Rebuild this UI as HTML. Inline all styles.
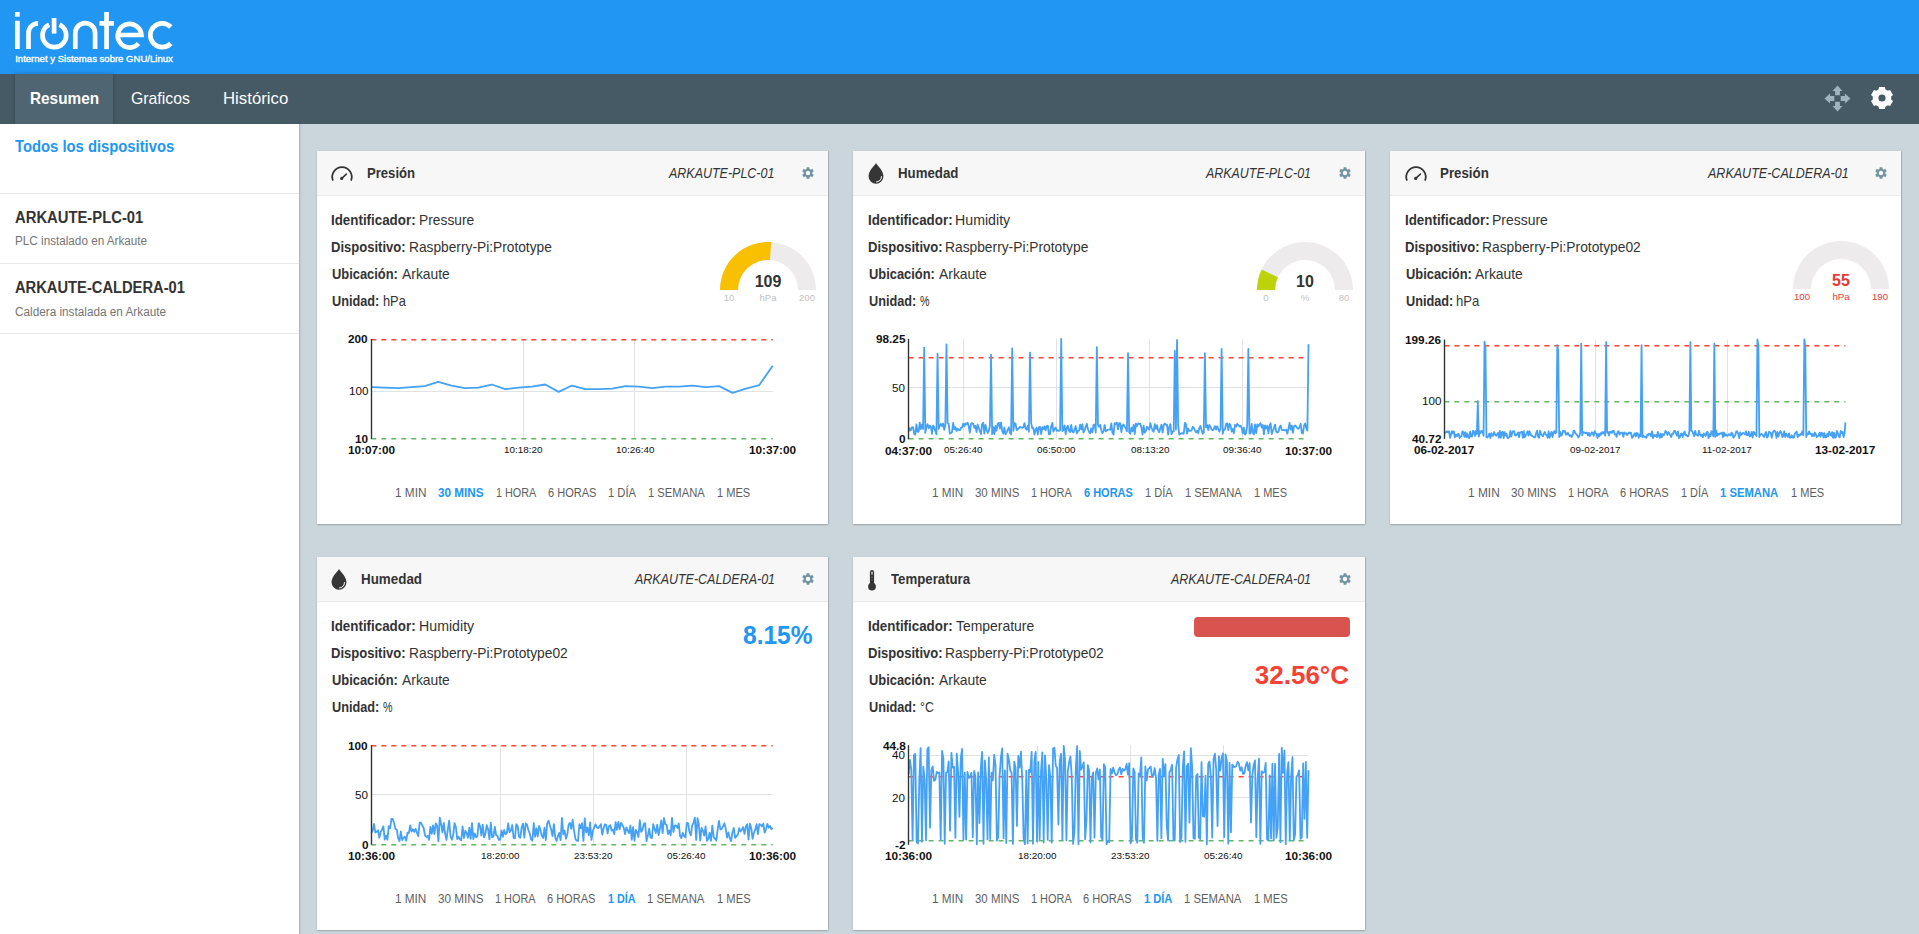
<!DOCTYPE html>
<html><head><meta charset="utf-8"><title>irontec</title><style>
*{box-sizing:border-box;margin:0;padding:0}
html,body{width:1919px;height:934px;overflow:hidden;background:#CBD6DC;font-family:"Liberation Sans",sans-serif;color:#333}
.abs{position:absolute}
.t{position:absolute;white-space:nowrap;line-height:1;transform-origin:0 0}
.card{position:absolute;background:#fff;box-shadow:0 1px 1.5px rgba(0,0,0,.22),1px 0 1px rgba(0,0,0,.12)}
.ch{position:absolute;left:0;top:0;right:0;height:45px;background:#F7F7F7;border-bottom:1px solid #ECECEC}
svg text{font-family:"Liberation Sans",sans-serif}
</style></head><body>
<div class="abs" style="left:0;top:0;width:1919px;height:74px;background:#2196F3"><svg class="abs" style="left:0;top:0" width="200" height="74" viewBox="0 0 200 74">
<g fill="none" stroke="#fff" stroke-width="4.7">
<line x1="17.4" y1="20.8" x2="17.4" y2="49"/>
<path d="M28.5 49.1 V33 A 9.6 9.6 0 0 1 38.1 23.4"/>
<path d="M49.16 24.70 A 11.85 11.85 0 1 0 59.54 24.70"/>
<line x1="54.1" y1="18.1" x2="54.1" y2="33.6"/>
<path d="M75.3 49 V33 A 9.8 9.8 0 0 1 95.1 33 V49"/>
<line x1="106.55" y1="12" x2="106.55" y2="49.1"/>
<line x1="99.4" y1="23.4" x2="114" y2="23.4"/>
<path d="M118 35 H141.4 A 11.8 11.8 0 1 0 138.5 43.5"/>
<path d="M170.8 27 A 11.9 11.9 0 1 0 170.8 43.5"/>
</g>
<rect x="15" y="12" width="4.7" height="4.7" fill="#fff"/>
<text x="15.2" y="61.7" font-size="8.2" fill="#fff" stroke="#fff" stroke-width="0.3" textLength="157.6" lengthAdjust="spacingAndGlyphs">Internet y Sistemas sobre GNU/Linux</text>
</svg></div>
<div class="abs" style="left:0;top:74px;width:1919px;height:50px;background:#455A64"><div class="abs" style="left:15px;top:0;width:98px;height:50px;background:#4F6571;box-shadow:0 0 4px rgba(0,0,0,.25)"></div></div>
<div class="t" style="left:29.56px;top:90.42px;font-size:16.4px;color:#fff;font-weight:bold;transform:scaleX(0.9363);">Resumen</div>
<div class="t" style="left:131.30px;top:90.42px;font-size:16.4px;color:#fff;transform:scaleX(0.9650);">Graficos</div>
<div class="t" style="left:223.28px;top:90.42px;font-size:16.4px;color:#fff;transform:scaleX(1.0233);">Histórico</div>
<svg class="abs" style="left:1824.1px;top:84.9px" width="27" height="27" viewBox="0 0 27 27"><path fill="#A0B3BC" d="M13.50 0.50 L18.50 6.10 L15.90 6.10 L15.90 10.30 L11.10 10.30 L11.10 6.10 L8.50 6.10 Z M26.50 13.50 L20.90 18.50 L20.90 15.90 L16.70 15.90 L16.70 11.10 L20.90 11.10 L20.90 8.50 Z M13.50 26.50 L8.50 20.90 L11.10 20.90 L11.10 16.70 L15.90 16.70 L15.90 20.90 L18.50 20.90 Z M0.50 13.50 L6.10 8.50 L6.10 11.10 L10.30 11.10 L10.30 15.90 L6.10 15.90 L6.10 18.50 Z"/></svg>
<svg class="abs" style="left:1866.5px;top:83.1px" width="30" height="30" viewBox="0 0 30 30"><path fill="#fff" fill-rule="evenodd" d="M12.05 3.99 L17.95 3.99 L18.33 6.32 L20.85 7.77 L23.06 6.94 L26.01 12.05 L24.19 13.55 L24.19 16.45 L26.01 17.95 L23.06 23.06 L20.85 22.23 L18.33 23.68 L17.95 26.01 L12.05 26.01 L11.67 23.68 L9.15 22.23 L6.94 23.06 L3.99 17.95 L5.81 16.45 L5.81 13.55 L3.99 12.05 L6.94 6.94 L9.15 7.77 L11.67 6.32 Z M18.60 15.00 A3.6 3.6 0 1 0 11.40 15.00 A3.6 3.6 0 1 0 18.60 15.00 Z"/></svg>
<div class="abs" style="left:0;top:124px;width:300px;height:810px;background:#fff;border-right:1px solid #B0B6B9;box-shadow:1px 0 2px rgba(0,0,0,.06)"></div>
<div class="abs" style="left:0;top:193px;width:299px;height:1px;background:#E8E8E8"></div>
<div class="abs" style="left:0;top:263px;width:299px;height:1px;background:#E8E8E8"></div>
<div class="abs" style="left:0;top:333px;width:299px;height:1px;background:#E8E8E8"></div>
<div class="t" style="left:14.60px;top:139.36px;font-size:16px;color:#2196F3;font-weight:bold;transform:scaleX(0.9247);">Todos los dispositivos</div>
<div class="t" style="left:14.60px;top:209.56px;font-size:16px;color:#333;font-weight:bold;transform:scaleX(0.9252);">ARKAUTE-PLC-01</div>
<div class="t" style="left:14.60px;top:235.44px;font-size:12px;color:#757575;transform:scaleX(0.9757);">PLC instalado en Arkaute</div>
<div class="t" style="left:14.60px;top:279.66px;font-size:16px;color:#333;font-weight:bold;transform:scaleX(0.9190);">ARKAUTE-CALDERA-01</div>
<div class="t" style="left:14.60px;top:305.74px;font-size:12px;color:#757575;transform:scaleX(0.9801);">Caldera instalada en Arkaute</div>
<div class="card" style="left:317px;top:151px;width:511px;height:373px"><div class="ch"></div></div>
<svg class="abs" style="left:330.1px;top:165.1px" width="24" height="24" viewBox="0 0 24 24">
<path d="M2.96 15.65 A 9.75 9.75 0 1 1 21.04 15.65" fill="none" stroke="#333" stroke-width="1.75"/>
<line x1="11.70" y1="13.40" x2="16.40" y2="9.10" stroke="#333" stroke-width="1.5" stroke-linecap="round"/>
<circle cx="11.70" cy="13.40" r="1.6" fill="#333"/></svg>
<div class="t" style="left:367.23px;top:165.20px;font-size:15px;color:#333;font-weight:bold;transform:scaleX(0.8727);">Presión</div>
<div class="t" style="left:669.23px;top:165.20px;font-size:15px;color:#333;font-style:italic;transform:scaleX(0.8315);">ARKAUTE-PLC-01</div>
<svg class="abs" style="left:801.2px;top:165.6px" width="14" height="14" viewBox="0 0 14 14"><path fill="#7393A3" fill-rule="evenodd" d="M5.60 1.17 L8.40 1.17 L8.47 2.85 L9.86 3.65 L11.35 2.87 L12.75 5.30 L11.33 6.20 L11.33 7.80 L12.75 8.70 L11.35 11.13 L9.86 10.35 L8.47 11.15 L8.40 12.83 L5.60 12.83 L5.53 11.15 L4.14 10.35 L2.65 11.13 L1.25 8.70 L2.67 7.80 L2.67 6.20 L1.25 5.30 L2.65 2.87 L4.14 3.65 L5.53 2.85 Z M9.20 7.00 A2.2 2.2 0 1 0 4.80 7.00 A2.2 2.2 0 1 0 9.20 7.00 Z"/></svg>
<div class="t" style="left:331.41px;top:212.20px;font-size:15px;color:#333;font-weight:bold;transform:scaleX(0.8903);">Identificador:</div>
<div class="t" style="left:418.78px;top:212.20px;font-size:15px;color:#333;transform:scaleX(0.9203);">Pressure</div>
<div class="t" style="left:331.43px;top:239.10px;font-size:15px;color:#333;font-weight:bold;transform:scaleX(0.8695);">Dispositivo:</div>
<div class="t" style="left:408.88px;top:239.10px;font-size:15px;color:#333;transform:scaleX(0.9162);">Raspberry-Pi:Prototype</div>
<div class="t" style="left:332.30px;top:266.00px;font-size:15px;color:#333;font-weight:bold;transform:scaleX(0.8589);">Ubicación:</div>
<div class="t" style="left:401.90px;top:266.00px;font-size:15px;color:#333;transform:scaleX(0.9250);">Arkaute</div>
<div class="t" style="left:332.30px;top:292.90px;font-size:15px;color:#333;font-weight:bold;transform:scaleX(0.8481);">Unidad:</div>
<div class="t" style="left:382.55px;top:292.90px;font-size:15px;color:#333;transform:scaleX(0.8540);">hPa</div>
<div class="t" style="left:395.00px;top:486.54px;font-size:12px;color:#5E5E5E;transform:scaleX(0.9828);">1 MIN</div>
<div class="t" style="left:437.70px;top:486.54px;font-size:12px;color:#2196F3;font-weight:bold;transform:scaleX(0.9748);">30 MINS</div>
<div class="t" style="left:495.90px;top:486.54px;font-size:12px;color:#5E5E5E;transform:scaleX(0.9021);">1 HORA</div>
<div class="t" style="left:547.80px;top:486.54px;font-size:12px;color:#5E5E5E;transform:scaleX(0.9188);">6 HORAS</div>
<div class="t" style="left:607.70px;top:486.54px;font-size:12px;color:#5E5E5E;transform:scaleX(0.9364);">1 DÍA</div>
<div class="t" style="left:648.40px;top:486.54px;font-size:12px;color:#5E5E5E;transform:scaleX(0.9344);">1 SEMANA</div>
<div class="t" style="left:717.20px;top:486.54px;font-size:12px;color:#5E5E5E;transform:scaleX(0.9220);">1 MES</div>
<svg class="abs" style="left:715px;top:237px" width="106" height="73" viewBox="0 0 106 73">
<path d="M5.00 53.00 A48 48 0 0 1 101.00 53.00 L83.00 53.00 A30 30 0 0 0 23.00 53.00 Z" fill="#EDEBEB"/>
<path d="M5.00 53.00 A48 48 0 0 1 56.17 5.10 L54.98 23.07 A30 30 0 0 0 23.00 53.00 Z" fill="#F9C002"/>
<text x="53.0" y="50.4" text-anchor="middle" font-size="16" font-weight="bold" fill="#333">109</text>
<text x="53.0" y="64.0" text-anchor="middle" font-size="9.6" fill="#C2C2C2">hPa</text>
<text x="14.0" y="64.0" text-anchor="middle" font-size="9.6" fill="#C2C2C2">10</text>
<text x="92.0" y="64.0" text-anchor="middle" font-size="9.6" fill="#C2C2C2">200</text>
</svg>
<svg class="abs" style="left:301px;top:327px" width="542" height="132" viewBox="0 0 542 132">
<line x1="70.3" x2="471.7" y1="64.5" y2="64.5" stroke="#E2E2E2" stroke-width="1"/>
<line x1="222.5" x2="222.5" y1="12.0" y2="111.4" stroke="#E2E2E2" stroke-width="1"/>
<line x1="333.5" x2="333.5" y1="12.0" y2="111.4" stroke="#E2E2E2" stroke-width="1"/>
<line x1="70.3" x2="471.7" y1="12.75" y2="12.75" stroke="#F43" stroke-width="1.5" stroke-dasharray="5,5"/>
<line x1="70.3" x2="471.7" y1="111.75" y2="111.75" stroke="#62B862" stroke-width="1.3" stroke-dasharray="5,5"/>
<polyline points="70.30,60.13 83.68,60.65 97.06,61.18 110.44,60.13 123.82,59.08 137.20,54.90 150.58,58.56 163.96,61.18 177.34,60.65 190.72,57.51 204.10,62.22 217.48,60.65 230.86,59.61 244.24,57.51 257.62,64.84 271.00,58.56 284.38,62.22 297.76,62.22 311.14,61.70 324.52,59.08 337.90,59.61 351.28,61.18 364.66,59.61 378.04,59.61 391.42,58.56 404.80,60.13 418.18,59.08 431.56,65.89 444.94,61.70 458.32,58.04 471.70,38.68" fill="none" stroke="#45A1F5" stroke-width="1.8" stroke-linejoin="round"/>
<line x1="70.5" x2="70.5" y1="12.0" y2="111.9" stroke="#333" stroke-width="1.4"/>
</svg>
<div class="t" style="left:348.49px;top:334.49px;font-size:11px;color:#111;font-weight:bold;transform:scaleX(1.0700);">200</div>
<div class="t" style="left:348.67px;top:386.40px;font-size:11px;color:#111;transform:scaleX(1.0600);">100</div>
<div class="t" style="left:355.03px;top:433.89px;font-size:11px;color:#111;font-weight:bold;transform:scaleX(1.0700);">10</div>
<div class="t" style="left:347.81px;top:445.19px;font-size:11px;color:#111;font-weight:bold;transform:scaleX(1.0700);">10:07:00</div>
<div class="t" style="left:504.42px;top:444.86px;font-size:9.5px;color:#111;transform:scaleX(1.0400);">10:18:20</div>
<div class="t" style="left:615.52px;top:444.86px;font-size:9.5px;color:#111;transform:scaleX(1.0400);">10:26:40</div>
<div class="t" style="left:749.21px;top:445.19px;font-size:11px;color:#111;font-weight:bold;transform:scaleX(1.0700);">10:37:00</div>
<div class="card" style="left:853px;top:151px;width:512px;height:373px"><div class="ch"></div></div>
<svg class="abs" style="left:866.80px;top:162.40px" width="18" height="24" viewBox="0 0 18 24">
<path d="M9 1 C 10.6 4.2 16.45 8.3 16.45 14.35 A 7.45 7.45 0 0 1 1.5499999999999998 14.35 C 1.5499999999999998 8.3 7.4 4.2 9 1 Z" fill="#363636"/>
<path d="M9.20 19.95 A 5.3 5.3 0 0 0 14.50 14.05 A 6.2 6.2 0 0 1 9.20 19.95 Z" fill="#fff" stroke="#fff" stroke-width="0.6"/></svg>
<div class="t" style="left:897.82px;top:165.20px;font-size:15px;color:#333;font-weight:bold;transform:scaleX(0.8842);">Humedad</div>
<div class="t" style="left:1206.33px;top:165.20px;font-size:15px;color:#333;font-style:italic;transform:scaleX(0.8284);">ARKAUTE-PLC-01</div>
<svg class="abs" style="left:1338.0px;top:165.6px" width="14" height="14" viewBox="0 0 14 14"><path fill="#7393A3" fill-rule="evenodd" d="M5.60 1.17 L8.40 1.17 L8.47 2.85 L9.86 3.65 L11.35 2.87 L12.75 5.30 L11.33 6.20 L11.33 7.80 L12.75 8.70 L11.35 11.13 L9.86 10.35 L8.47 11.15 L8.40 12.83 L5.60 12.83 L5.53 11.15 L4.14 10.35 L2.65 11.13 L1.25 8.70 L2.67 7.80 L2.67 6.20 L1.25 5.30 L2.65 2.87 L4.14 3.65 L5.53 2.85 Z M9.20 7.00 A2.2 2.2 0 1 0 4.80 7.00 A2.2 2.2 0 1 0 9.20 7.00 Z"/></svg>
<div class="t" style="left:868.01px;top:212.20px;font-size:15px;color:#333;font-weight:bold;transform:scaleX(0.8903);">Identificador:</div>
<div class="t" style="left:955.35px;top:212.20px;font-size:15px;color:#333;transform:scaleX(0.9456);">Humidity</div>
<div class="t" style="left:868.03px;top:239.10px;font-size:15px;color:#333;font-weight:bold;transform:scaleX(0.8695);">Dispositivo:</div>
<div class="t" style="left:945.48px;top:239.10px;font-size:15px;color:#333;transform:scaleX(0.9194);">Raspberry-Pi:Prototype</div>
<div class="t" style="left:868.90px;top:266.00px;font-size:15px;color:#333;font-weight:bold;transform:scaleX(0.8589);">Ubicación:</div>
<div class="t" style="left:938.50px;top:266.00px;font-size:15px;color:#333;transform:scaleX(0.9250);">Arkaute</div>
<div class="t" style="left:868.90px;top:292.90px;font-size:15px;color:#333;font-weight:bold;transform:scaleX(0.8481);">Unidad:</div>
<div class="t" style="left:920.00px;top:292.90px;font-size:15px;color:#333;transform:scaleX(0.7154);">%</div>
<div class="t" style="left:931.50px;top:486.54px;font-size:12px;color:#5E5E5E;transform:scaleX(0.9733);">1 MIN</div>
<div class="t" style="left:974.50px;top:486.54px;font-size:12px;color:#5E5E5E;transform:scaleX(0.9533);">30 MINS</div>
<div class="t" style="left:1031.30px;top:486.54px;font-size:12px;color:#5E5E5E;transform:scaleX(0.9110);">1 HORA</div>
<div class="t" style="left:1084.00px;top:486.54px;font-size:12px;color:#2196F3;font-weight:bold;transform:scaleX(0.9168);">6 HORAS</div>
<div class="t" style="left:1144.80px;top:486.54px;font-size:12px;color:#5E5E5E;transform:scaleX(0.9231);">1 DÍA</div>
<div class="t" style="left:1185.00px;top:486.54px;font-size:12px;color:#5E5E5E;transform:scaleX(0.9360);">1 SEMANA</div>
<div class="t" style="left:1254.30px;top:486.54px;font-size:12px;color:#5E5E5E;transform:scaleX(0.9165);">1 MES</div>
<svg class="abs" style="left:1252px;top:237px" width="106" height="73" viewBox="0 0 106 73">
<path d="M5.00 53.00 A48 48 0 0 1 101.00 53.00 L83.00 53.00 A30 30 0 0 0 23.00 53.00 Z" fill="#EDEBEB"/>
<path d="M5.00 53.00 A48 48 0 0 1 9.57 32.56 L25.86 40.23 A30 30 0 0 0 23.00 53.00 Z" fill="#BDD309"/>
<text x="53.0" y="50.4" text-anchor="middle" font-size="16" font-weight="bold" fill="#333">10</text>
<text x="53.0" y="64.0" text-anchor="middle" font-size="9.6" fill="#C2C2C2">%</text>
<text x="14.0" y="64.0" text-anchor="middle" font-size="9.6" fill="#C2C2C2">0</text>
<text x="92.0" y="64.0" text-anchor="middle" font-size="9.6" fill="#C2C2C2">80</text>
</svg>
<svg class="abs" style="left:838px;top:326px" width="541" height="133" viewBox="0 0 541 133">
<line x1="70.6" x2="470.5" y1="61.5" y2="61.5" stroke="#E2E2E2" stroke-width="1"/>
<line x1="125.5" x2="125.5" y1="12.8" y2="112.8" stroke="#E2E2E2" stroke-width="1"/>
<line x1="218.5" x2="218.5" y1="12.8" y2="112.8" stroke="#E2E2E2" stroke-width="1"/>
<line x1="311.5" x2="311.5" y1="12.8" y2="112.8" stroke="#E2E2E2" stroke-width="1"/>
<line x1="404.5" x2="404.5" y1="12.8" y2="112.8" stroke="#E2E2E2" stroke-width="1"/>
<line x1="70.6" x2="470.5" y1="31.75" y2="31.75" stroke="#F43" stroke-width="1.5" stroke-dasharray="5,5"/>
<line x1="70.6" x2="470.5" y1="112.75" y2="112.75" stroke="#62B862" stroke-width="1.3" stroke-dasharray="5,5"/>
<polyline points="70.60,105.82 71.71,102.08 72.83,104.21 73.94,101.35 75.06,101.09 76.17,107.93 77.28,108.57 78.40,98.50 79.51,105.56 80.63,105.87 81.74,96.57 82.85,102.99 83.97,98.51 85.08,102.91 86.19,21.62 87.31,106.89 88.42,100.97 89.54,98.13 90.65,102.34 91.76,99.68 92.88,100.53 93.99,107.95 95.11,99.47 96.22,101.51 97.33,105.05 98.45,108.35 99.56,27.70 100.68,102.95 101.79,99.95 102.90,98.00 104.02,100.01 105.13,97.48 106.25,103.90 107.36,98.95 108.47,18.31 109.59,97.30 110.70,97.99 111.82,107.54 112.93,107.07 114.04,106.08 115.16,96.94 116.27,103.40 117.38,101.08 118.50,105.05 119.61,102.53 120.73,104.02 121.84,104.44 122.95,101.58 124.07,101.59 125.18,97.69 126.30,100.40 127.41,97.38 128.52,98.27 129.64,96.63 130.75,100.53 131.87,106.74 132.98,98.22 134.09,96.95 135.21,97.68 136.32,101.78 137.44,100.01 138.55,106.15 139.66,98.57 140.78,101.72 141.89,105.25 143.01,107.95 144.12,98.30 145.23,96.64 146.35,107.65 147.46,98.95 148.57,103.72 149.69,106.89 150.80,105.14 151.92,99.34 153.03,28.53 154.14,108.19 155.26,101.22 156.37,108.18 157.49,99.95 158.60,104.69 159.71,97.97 160.83,96.75 161.94,102.56 163.06,96.53 164.17,104.95 165.28,107.79 166.40,101.40 167.51,108.35 168.63,106.32 169.74,103.75 170.85,101.27 171.97,106.82 173.08,108.21 174.20,22.45 175.31,104.90 176.42,97.02 177.54,97.78 178.65,104.11 179.76,103.11 180.88,102.38 181.99,100.86 183.11,101.45 184.22,101.90 185.33,101.15 186.45,97.24 187.56,102.54 188.68,103.46 189.79,99.93 190.90,105.83 192.02,26.60 193.13,96.79 194.25,102.36 195.36,102.03 196.47,108.59 197.59,103.66 198.70,101.65 199.82,108.48 200.93,101.21 202.04,101.01 203.16,107.99 204.27,101.07 205.39,103.03 206.50,100.43 207.61,104.42 208.73,100.09 209.84,99.71 210.95,108.46 212.07,107.99 213.18,100.47 214.30,96.96 215.41,105.66 216.52,103.16 217.64,101.49 218.75,104.82 219.87,104.28 220.98,104.91 222.09,104.22 223.21,12.78 224.32,105.06 225.44,104.12 226.55,99.30 227.66,108.40 228.78,101.78 229.89,99.75 231.01,104.94 232.12,106.01 233.23,98.91 234.35,105.81 235.46,106.44 236.58,103.41 237.69,100.20 238.80,107.48 239.92,104.80 241.03,104.65 242.14,98.55 243.26,103.37 244.37,98.28 245.49,106.66 246.60,104.62 247.71,100.79 248.83,97.92 249.94,103.22 251.06,105.98 252.17,107.25 253.28,102.26 254.40,106.40 255.51,98.87 256.63,98.49 257.74,106.49 258.85,21.07 259.97,98.87 261.08,100.89 262.20,98.88 263.31,104.51 264.42,107.14 265.54,105.16 266.65,99.03 267.77,105.42 268.88,104.50 269.99,103.64 271.11,103.60 272.22,103.73 273.33,97.48 274.45,106.82 275.56,108.67 276.68,97.21 277.79,97.98 278.90,96.67 280.02,103.42 281.13,97.12 282.25,97.40 283.36,106.02 284.47,99.62 285.59,98.51 286.70,100.63 287.82,102.39 288.93,105.20 290.04,27.15 291.16,105.95 292.27,107.90 293.39,101.54 294.50,105.22 295.61,98.83 296.73,108.18 297.84,97.69 298.96,100.26 300.07,97.45 301.18,97.78 302.30,97.74 303.41,101.68 304.52,108.57 305.64,99.63 306.75,106.63 307.87,105.07 308.98,100.63 310.09,102.32 311.21,103.68 312.32,97.26 313.44,101.25 314.55,104.56 315.66,105.65 316.78,98.20 317.89,102.90 319.01,99.17 320.12,104.43 321.23,106.32 322.35,102.20 323.46,98.75 324.58,106.64 325.69,99.06 326.80,97.47 327.92,98.88 329.03,98.67 330.15,108.64 331.26,101.05 332.37,98.19 333.49,108.12 334.60,105.41 335.71,105.45 336.83,24.94 337.94,103.56 339.06,13.89 340.17,99.24 341.28,108.71 342.40,108.06 343.51,107.18 344.63,107.21 345.74,107.89 346.85,96.82 347.97,98.29 349.08,107.68 350.20,102.60 351.31,104.87 352.42,104.89 353.54,104.44 354.65,100.83 355.77,101.56 356.88,104.32 357.99,106.39 359.11,104.71 360.22,107.22 361.34,101.94 362.45,99.98 363.56,104.08 364.68,107.75 365.79,106.55 366.90,27.15 368.02,101.35 369.13,99.17 370.25,104.08 371.36,98.94 372.47,101.12 373.59,103.46 374.70,104.18 375.82,102.67 376.93,100.14 378.04,103.59 379.16,100.25 380.27,103.10 381.39,105.74 382.50,102.18 383.61,23.01 384.73,107.85 385.84,103.54 386.96,103.53 388.07,97.98 389.18,97.29 390.30,104.16 391.41,97.76 392.53,99.07 393.64,105.53 394.75,103.06 395.87,107.22 396.98,98.80 398.09,100.64 399.21,97.89 400.32,99.05 401.44,100.58 402.55,99.77 403.66,101.84 404.78,107.47 405.89,101.55 407.01,108.67 408.12,106.98 409.23,99.27 410.35,23.01 411.46,107.61 412.58,107.52 413.69,97.97 414.80,106.54 415.92,108.44 417.03,98.45 418.15,107.25 419.26,98.42 420.37,100.50 421.49,98.52 422.60,97.10 423.72,101.66 424.83,98.97 425.94,108.29 427.06,99.36 428.17,102.48 429.28,99.99 430.40,107.43 431.51,99.58 432.63,97.31 433.74,107.98 434.85,104.77 435.97,101.84 437.08,98.62 438.20,105.77 439.31,106.53 440.42,105.68 441.54,101.21 442.65,99.53 443.77,103.92 444.88,104.24 445.99,103.88 447.11,104.45 448.22,103.62 449.34,107.71 450.45,102.62 451.56,96.84 452.68,103.69 453.79,99.60 454.91,106.77 456.02,100.29 457.13,99.49 458.25,100.50 459.36,102.41 460.47,102.82 461.59,100.88 462.70,97.77 463.82,106.90 464.93,107.56 466.04,99.59 467.16,97.53 468.27,102.41 469.39,104.66 470.50,18.31" fill="none" stroke="#45A1F5" stroke-width="1.8" stroke-linejoin="round"/>
<line x1="70.5" x2="70.5" y1="12.8" y2="113.3" stroke="#333" stroke-width="1.4"/>
</svg>
<div class="t" style="left:875.97px;top:334.29px;font-size:11px;color:#111;font-weight:bold;transform:scaleX(1.0700);">98.25</div>
<div class="t" style="left:892.46px;top:383.00px;font-size:11px;color:#111;transform:scaleX(1.0600);">50</div>
<div class="t" style="left:898.88px;top:434.29px;font-size:11px;color:#111;font-weight:bold;transform:scaleX(1.0700);">0</div>
<div class="t" style="left:885.11px;top:445.59px;font-size:11px;color:#111;font-weight:bold;transform:scaleX(1.0700);">04:37:00</div>
<div class="t" style="left:944.22px;top:445.26px;font-size:9.5px;color:#111;transform:scaleX(1.0400);">05:26:40</div>
<div class="t" style="left:1037.32px;top:445.26px;font-size:9.5px;color:#111;transform:scaleX(1.0400);">06:50:00</div>
<div class="t" style="left:1130.62px;top:445.26px;font-size:9.5px;color:#111;transform:scaleX(1.0400);">08:13:20</div>
<div class="t" style="left:1223.22px;top:445.26px;font-size:9.5px;color:#111;transform:scaleX(1.0400);">09:36:40</div>
<div class="t" style="left:1285.01px;top:445.59px;font-size:11px;color:#111;font-weight:bold;transform:scaleX(1.0700);">10:37:00</div>
<div class="card" style="left:1390px;top:151px;width:511px;height:373px"><div class="ch"></div></div>
<svg class="abs" style="left:1403.6px;top:165.1px" width="24" height="24" viewBox="0 0 24 24">
<path d="M2.96 15.65 A 9.75 9.75 0 1 1 21.04 15.65" fill="none" stroke="#333" stroke-width="1.75"/>
<line x1="11.70" y1="13.40" x2="16.40" y2="9.10" stroke="#333" stroke-width="1.5" stroke-linecap="round"/>
<circle cx="11.70" cy="13.40" r="1.6" fill="#333"/></svg>
<div class="t" style="left:1440.11px;top:165.20px;font-size:15px;color:#333;font-weight:bold;transform:scaleX(0.8875);">Presión</div>
<div class="t" style="left:1707.64px;top:165.20px;font-size:15px;color:#333;font-style:italic;transform:scaleX(0.8353);">ARKAUTE-CALDERA-01</div>
<svg class="abs" style="left:1874.3px;top:165.6px" width="14" height="14" viewBox="0 0 14 14"><path fill="#7393A3" fill-rule="evenodd" d="M5.60 1.17 L8.40 1.17 L8.47 2.85 L9.86 3.65 L11.35 2.87 L12.75 5.30 L11.33 6.20 L11.33 7.80 L12.75 8.70 L11.35 11.13 L9.86 10.35 L8.47 11.15 L8.40 12.83 L5.60 12.83 L5.53 11.15 L4.14 10.35 L2.65 11.13 L1.25 8.70 L2.67 7.80 L2.67 6.20 L1.25 5.30 L2.65 2.87 L4.14 3.65 L5.53 2.85 Z M9.20 7.00 A2.2 2.2 0 1 0 4.80 7.00 A2.2 2.2 0 1 0 9.20 7.00 Z"/></svg>
<div class="t" style="left:1404.61px;top:212.20px;font-size:15px;color:#333;font-weight:bold;transform:scaleX(0.8903);">Identificador:</div>
<div class="t" style="left:1491.97px;top:212.20px;font-size:15px;color:#333;transform:scaleX(0.9305);">Pressure</div>
<div class="t" style="left:1404.63px;top:239.10px;font-size:15px;color:#333;font-weight:bold;transform:scaleX(0.8695);">Dispositivo:</div>
<div class="t" style="left:1482.08px;top:239.10px;font-size:15px;color:#333;transform:scaleX(0.9198);">Raspberry-Pi:Prototype02</div>
<div class="t" style="left:1405.50px;top:266.00px;font-size:15px;color:#333;font-weight:bold;transform:scaleX(0.8589);">Ubicación:</div>
<div class="t" style="left:1475.10px;top:266.00px;font-size:15px;color:#333;transform:scaleX(0.9250);">Arkaute</div>
<div class="t" style="left:1405.50px;top:292.90px;font-size:15px;color:#333;font-weight:bold;transform:scaleX(0.8481);">Unidad:</div>
<div class="t" style="left:1455.73px;top:292.90px;font-size:15px;color:#333;transform:scaleX(0.8730);">hPa</div>
<div class="t" style="left:1467.90px;top:486.54px;font-size:12px;color:#5E5E5E;transform:scaleX(0.9924);">1 MIN</div>
<div class="t" style="left:1510.80px;top:486.54px;font-size:12px;color:#5E5E5E;transform:scaleX(0.9683);">30 MINS</div>
<div class="t" style="left:1567.90px;top:486.54px;font-size:12px;color:#5E5E5E;transform:scaleX(0.9088);">1 HORA</div>
<div class="t" style="left:1620.30px;top:486.54px;font-size:12px;color:#5E5E5E;transform:scaleX(0.9226);">6 HORAS</div>
<div class="t" style="left:1680.70px;top:486.54px;font-size:12px;color:#5E5E5E;transform:scaleX(0.9098);">1 DÍA</div>
<div class="t" style="left:1720.30px;top:486.54px;font-size:12px;color:#2196F3;font-weight:bold;transform:scaleX(0.9383);">1 SEMANA</div>
<div class="t" style="left:1790.60px;top:486.54px;font-size:12px;color:#5E5E5E;transform:scaleX(0.9192);">1 MES</div>
<svg class="abs" style="left:1788px;top:236px" width="106" height="73" viewBox="0 0 106 73">
<path d="M5.00 53.00 A48 48 0 0 1 101.00 53.00 L83.00 53.00 A30 30 0 0 0 23.00 53.00 Z" fill="#EDEBEB"/>
<text x="53.0" y="50.4" text-anchor="middle" font-size="16" font-weight="bold" fill="#E53935">55</text>
<text x="53.0" y="64.0" text-anchor="middle" font-size="9.6" fill="#E53935">hPa</text>
<text x="14.0" y="64.0" text-anchor="middle" font-size="9.6" fill="#E53935">100</text>
<text x="92.0" y="64.0" text-anchor="middle" font-size="9.6" fill="#E53935">190</text>
</svg>
<svg class="abs" style="left:1374px;top:327px" width="542" height="132" viewBox="0 0 542 132">
<line x1="221.5" x2="221.5" y1="12.5" y2="111.3" stroke="#E2E2E2" stroke-width="1"/>
<line x1="353.5" x2="353.5" y1="12.5" y2="111.3" stroke="#E2E2E2" stroke-width="1"/>
<line x1="70.3" x2="471.5" y1="18.75" y2="18.75" stroke="#F43" stroke-width="1.5" stroke-dasharray="5,5"/>
<line x1="70.3" x2="471.5" y1="74.75" y2="74.75" stroke="#62B862" stroke-width="1.3" stroke-dasharray="5,5"/>
<polyline points="70.30,106.47 71.26,105.58 72.22,105.18 73.17,104.08 74.13,105.59 75.09,104.23 76.05,110.91 77.00,107.64 77.96,104.07 78.92,106.27 79.88,104.39 80.83,110.28 81.79,107.62 82.75,109.28 83.71,107.06 84.66,106.83 85.62,111.03 86.58,109.50 87.54,109.04 88.49,104.27 89.45,105.40 90.41,109.93 91.37,105.16 92.32,110.09 93.28,106.51 94.24,110.18 95.20,111.11 96.15,104.61 97.11,109.56 98.07,109.51 99.03,103.78 99.98,104.60 100.94,108.96 101.90,103.94 102.86,107.09 103.81,74.25 104.77,109.59 105.73,104.09 106.69,105.96 107.64,103.90 108.60,104.44 109.56,108.89 110.52,14.70 111.47,20.80 112.43,110.04 113.39,110.64 114.35,108.87 115.30,106.62 116.26,111.10 117.22,106.06 118.18,108.60 119.13,108.81 120.09,105.00 121.05,107.53 122.01,108.76 122.96,107.53 123.92,105.86 124.88,110.70 125.84,103.83 126.79,110.95 127.75,105.52 128.71,104.81 129.67,110.99 130.62,105.23 131.58,108.39 132.54,106.80 133.50,111.06 134.45,110.78 135.41,109.77 136.37,103.98 137.33,109.66 138.28,105.47 139.24,104.17 140.20,104.08 141.16,108.55 142.11,108.47 143.07,107.20 144.03,105.33 144.99,110.32 145.94,105.53 146.90,105.16 147.86,104.70 148.82,110.85 149.77,104.05 150.73,110.44 151.69,108.58 152.65,106.56 153.60,104.26 154.56,108.58 155.52,104.21 156.48,107.05 157.43,108.79 158.39,108.76 159.35,109.80 160.31,110.54 161.26,110.01 162.22,105.97 163.18,103.67 164.14,109.92 165.09,110.76 166.05,103.75 167.01,107.14 167.97,108.09 168.92,109.35 169.88,106.68 170.84,104.95 171.80,107.72 172.75,107.97 173.71,110.71 174.67,104.27 175.63,110.88 176.58,107.43 177.54,104.86 178.50,110.15 179.46,105.65 180.41,104.02 181.37,106.41 182.33,105.23 183.29,18.04 184.24,23.97 185.20,110.01 186.16,104.81 187.12,108.92 188.07,107.74 189.03,103.65 189.99,104.75 190.95,103.83 191.90,107.73 192.86,107.47 193.82,105.67 194.78,107.54 195.73,108.95 196.69,108.11 197.65,110.03 198.61,108.31 199.56,103.73 200.52,103.95 201.48,106.44 202.44,107.39 203.39,108.59 204.35,110.46 205.31,109.09 206.27,105.28 207.23,16.65 208.18,108.42 209.14,105.25 210.10,105.33 211.06,105.93 212.01,106.16 212.97,105.44 213.93,108.41 214.89,105.86 215.84,109.03 216.80,107.49 217.76,105.37 218.72,105.96 219.67,108.93 220.63,104.05 221.59,106.27 222.55,106.78 223.50,111.04 224.46,107.03 225.42,109.25 226.38,106.10 227.33,107.66 228.29,105.02 229.25,106.28 230.21,105.16 231.16,108.52 232.12,15.26 233.08,105.61 234.04,104.93 234.99,108.51 235.95,104.82 236.91,104.62 237.87,105.98 238.82,103.83 239.78,103.97 240.74,107.25 241.70,107.17 242.65,109.88 243.61,104.87 244.57,104.12 245.53,107.56 246.48,105.95 247.44,105.74 248.40,105.66 249.36,109.84 250.31,105.29 251.27,106.78 252.23,106.15 253.19,107.98 254.14,106.46 255.10,105.33 256.06,106.36 257.02,105.74 257.97,110.92 258.93,109.93 259.89,107.83 260.85,106.26 261.80,109.49 262.76,106.00 263.72,106.41 264.68,110.81 265.63,107.60 266.59,109.43 267.55,18.04 268.51,110.13 269.46,108.75 270.42,109.77 271.38,109.68 272.34,110.86 273.29,107.65 274.25,108.28 275.21,106.55 276.17,106.71 277.12,109.35 278.08,104.37 279.04,111.12 280.00,108.09 280.95,109.04 281.91,108.06 282.87,110.26 283.83,104.91 284.78,108.33 285.74,110.86 286.70,106.54 287.66,110.42 288.61,107.05 289.57,108.59 290.53,106.78 291.49,103.96 292.44,105.00 293.40,107.99 294.36,105.05 295.32,106.32 296.27,108.36 297.23,110.06 298.19,106.67 299.15,106.91 300.10,103.97 301.06,103.89 302.02,106.57 302.98,108.50 303.93,104.44 304.89,111.12 305.85,110.32 306.81,106.89 307.76,106.53 308.72,110.07 309.68,106.42 310.64,104.46 311.59,108.31 312.55,107.90 313.51,109.43 314.47,108.95 315.42,103.85 316.38,15.26 317.34,103.94 318.30,104.29 319.25,106.67 320.21,109.18 321.17,103.79 322.13,107.41 323.08,108.02 324.04,108.74 325.00,103.76 325.96,107.45 326.91,108.98 327.87,107.56 328.83,110.21 329.79,106.48 330.74,107.81 331.70,108.93 332.66,105.28 333.62,104.94 334.57,111.03 335.53,107.14 336.49,109.08 337.45,104.13 338.41,105.28 339.36,109.29 340.32,16.65 341.28,109.97 342.24,103.73 343.19,108.93 344.15,106.58 345.11,107.58 346.07,106.30 347.02,106.61 347.98,105.57 348.94,110.24 349.90,105.44 350.85,108.88 351.81,107.14 352.77,108.61 353.73,108.91 354.68,107.16 355.64,107.65 356.60,108.43 357.56,105.55 358.51,106.71 359.47,110.85 360.43,109.24 361.39,107.72 362.34,104.27 363.30,104.49 364.26,107.05 365.22,111.02 366.17,105.30 367.13,107.93 368.09,106.82 369.05,105.83 370.00,106.40 370.96,107.52 371.92,104.31 372.88,108.24 373.83,108.20 374.79,104.75 375.75,109.66 376.71,108.91 377.66,104.92 378.62,110.63 379.58,104.87 380.54,105.93 381.49,107.89 382.45,108.98 383.41,12.48 384.37,18.69 385.32,110.06 386.28,107.55 387.24,107.02 388.20,107.40 389.15,108.65 390.11,109.98 391.07,106.74 392.03,105.05 392.98,110.61 393.94,109.41 394.90,105.00 395.86,105.20 396.81,106.16 397.77,110.93 398.73,105.72 399.69,103.81 400.64,103.66 401.60,105.88 402.56,110.76 403.52,104.83 404.47,109.49 405.43,106.30 406.39,104.00 407.35,105.80 408.30,110.12 409.26,108.94 410.22,104.26 411.18,110.01 412.13,106.56 413.09,108.03 414.05,109.92 415.01,106.47 415.96,110.80 416.92,110.32 417.88,108.29 418.84,110.59 419.79,110.70 420.75,106.82 421.71,105.57 422.67,104.56 423.62,110.12 424.58,107.90 425.54,108.77 426.50,106.64 427.45,107.46 428.41,104.11 429.37,108.33 430.33,12.48 431.28,18.69 432.24,110.00 433.20,106.40 434.16,107.34 435.11,104.32 436.07,106.98 437.03,106.48 437.99,109.16 438.94,107.00 439.90,109.22 440.86,105.51 441.82,107.26 442.77,110.13 443.73,109.37 444.69,108.35 445.65,105.62 446.60,109.78 447.56,105.79 448.52,106.23 449.48,110.49 450.43,106.13 451.39,110.44 452.35,110.19 453.31,106.68 454.26,109.34 455.22,104.57 456.18,107.53 457.14,108.71 458.09,105.17 459.05,110.91 460.01,105.70 460.97,110.72 461.92,110.00 462.88,104.01 463.84,106.03 464.80,109.46 465.75,110.26 466.71,103.85 467.67,106.15 468.63,104.99 469.58,110.08 470.54,106.45 471.50,95.39" fill="none" stroke="#45A1F5" stroke-width="1.8" stroke-linejoin="round"/>
<line x1="70.5" x2="70.5" y1="12.5" y2="111.8" stroke="#333" stroke-width="1.4"/>
</svg>
<div class="t" style="left:1405.13px;top:334.99px;font-size:11px;color:#111;font-weight:bold;transform:scaleX(1.0700);">199.26</div>
<div class="t" style="left:1421.67px;top:396.45px;font-size:11px;color:#111;transform:scaleX(1.0600);">100</div>
<div class="t" style="left:1411.67px;top:433.79px;font-size:11px;color:#111;font-weight:bold;transform:scaleX(1.0700);">40.72</div>
<div class="t" style="left:1414.26px;top:445.09px;font-size:11px;color:#111;font-weight:bold;transform:scaleX(1.0700);">06-02-2017</div>
<div class="t" style="left:1569.88px;top:444.76px;font-size:9.5px;color:#111;transform:scaleX(1.0400);">09-02-2017</div>
<div class="t" style="left:1702.24px;top:444.76px;font-size:9.5px;color:#111;transform:scaleX(1.0400);">11-02-2017</div>
<div class="t" style="left:1815.46px;top:445.09px;font-size:11px;color:#111;font-weight:bold;transform:scaleX(1.0700);">13-02-2017</div>
<div class="card" style="left:317px;top:557px;width:511px;height:373px"><div class="ch"></div></div>
<svg class="abs" style="left:330.00px;top:568.40px" width="18" height="24" viewBox="0 0 18 24">
<path d="M9 1 C 10.6 4.2 16.45 8.3 16.45 14.35 A 7.45 7.45 0 0 1 1.5499999999999998 14.35 C 1.5499999999999998 8.3 7.4 4.2 9 1 Z" fill="#363636"/>
<path d="M9.20 19.95 A 5.3 5.3 0 0 0 14.50 14.05 A 6.2 6.2 0 0 1 9.20 19.95 Z" fill="#fff" stroke="#fff" stroke-width="0.6"/></svg>
<div class="t" style="left:361.01px;top:571.20px;font-size:15px;color:#333;font-weight:bold;transform:scaleX(0.8931);">Humedad</div>
<div class="t" style="left:634.53px;top:571.20px;font-size:15px;color:#333;font-style:italic;transform:scaleX(0.8318);">ARKAUTE-CALDERA-01</div>
<svg class="abs" style="left:801.2px;top:571.6px" width="14" height="14" viewBox="0 0 14 14"><path fill="#7393A3" fill-rule="evenodd" d="M5.60 1.17 L8.40 1.17 L8.47 2.85 L9.86 3.65 L11.35 2.87 L12.75 5.30 L11.33 6.20 L11.33 7.80 L12.75 8.70 L11.35 11.13 L9.86 10.35 L8.47 11.15 L8.40 12.83 L5.60 12.83 L5.53 11.15 L4.14 10.35 L2.65 11.13 L1.25 8.70 L2.67 7.80 L2.67 6.20 L1.25 5.30 L2.65 2.87 L4.14 3.65 L5.53 2.85 Z M9.20 7.00 A2.2 2.2 0 1 0 4.80 7.00 A2.2 2.2 0 1 0 9.20 7.00 Z"/></svg>
<div class="t" style="left:331.41px;top:618.20px;font-size:15px;color:#333;font-weight:bold;transform:scaleX(0.8903);">Identificador:</div>
<div class="t" style="left:418.75px;top:618.20px;font-size:15px;color:#333;transform:scaleX(0.9456);">Humidity</div>
<div class="t" style="left:331.43px;top:645.10px;font-size:15px;color:#333;font-weight:bold;transform:scaleX(0.8695);">Dispositivo:</div>
<div class="t" style="left:408.88px;top:645.10px;font-size:15px;color:#333;transform:scaleX(0.9198);">Raspberry-Pi:Prototype02</div>
<div class="t" style="left:332.30px;top:672.00px;font-size:15px;color:#333;font-weight:bold;transform:scaleX(0.8589);">Ubicación:</div>
<div class="t" style="left:401.90px;top:672.00px;font-size:15px;color:#333;transform:scaleX(0.9250);">Arkaute</div>
<div class="t" style="left:332.30px;top:698.90px;font-size:15px;color:#333;font-weight:bold;transform:scaleX(0.8481);">Unidad:</div>
<div class="t" style="left:383.40px;top:698.90px;font-size:15px;color:#333;transform:scaleX(0.7154);">%</div>
<div class="t" style="left:394.90px;top:892.54px;font-size:12px;color:#5E5E5E;transform:scaleX(0.9796);">1 MIN</div>
<div class="t" style="left:437.50px;top:892.54px;font-size:12px;color:#5E5E5E;transform:scaleX(0.9748);">30 MINS</div>
<div class="t" style="left:494.90px;top:892.54px;font-size:12px;color:#5E5E5E;transform:scaleX(0.9088);">1 HORA</div>
<div class="t" style="left:547.00px;top:892.54px;font-size:12px;color:#5E5E5E;transform:scaleX(0.9169);">6 HORAS</div>
<div class="t" style="left:607.80px;top:892.54px;font-size:12px;color:#2196F3;font-weight:bold;transform:scaleX(0.8933);">1 DÍA</div>
<div class="t" style="left:647.40px;top:892.54px;font-size:12px;color:#5E5E5E;transform:scaleX(0.9459);">1 SEMANA</div>
<div class="t" style="left:716.70px;top:892.54px;font-size:12px;color:#5E5E5E;transform:scaleX(0.9331);">1 MES</div>
<div class="t" style="left:742.80px;top:621.69px;font-size:26px;color:#2196F3;font-weight:bold;transform:scaleX(0.9429);">8.15%</div>
<svg class="abs" style="left:301px;top:733px" width="542" height="132" viewBox="0 0 542 132">
<line x1="70.3" x2="471.7" y1="61.5" y2="61.5" stroke="#E2E2E2" stroke-width="1"/>
<line x1="199.5" x2="199.5" y1="12.2" y2="111.3" stroke="#E2E2E2" stroke-width="1"/>
<line x1="292.5" x2="292.5" y1="12.2" y2="111.3" stroke="#E2E2E2" stroke-width="1"/>
<line x1="385.5" x2="385.5" y1="12.2" y2="111.3" stroke="#E2E2E2" stroke-width="1"/>
<line x1="70.3" x2="471.7" y1="12.75" y2="12.75" stroke="#F43" stroke-width="1.5" stroke-dasharray="5,5"/>
<line x1="70.3" x2="471.7" y1="111.75" y2="111.75" stroke="#62B862" stroke-width="1.3" stroke-dasharray="5,5"/>
<polyline points="70.30,99.81 71.64,97.79 72.98,90.93 74.33,99.56 75.67,98.76 77.01,97.27 78.35,104.85 79.70,98.69 81.04,96.47 82.38,93.40 83.72,106.55 85.07,102.61 86.41,106.62 87.75,93.08 89.09,95.27 90.44,85.87 91.78,85.93 93.12,90.16 94.46,96.01 95.81,96.74 97.15,105.36 98.49,108.04 99.83,98.38 101.18,107.21 102.52,104.75 103.86,103.77 105.20,107.76 106.55,99.59 107.89,100.03 109.23,92.46 110.57,98.55 111.92,96.27 113.26,98.92 114.60,95.85 115.94,99.72 117.29,103.09 118.63,89.54 119.97,89.58 121.31,92.51 122.66,95.00 124.00,102.39 125.34,104.00 126.68,102.88 128.03,107.00 129.37,93.90 130.71,100.79 132.05,92.39 133.40,101.05 134.74,90.29 136.08,92.37 137.42,108.32 138.77,84.76 140.11,91.19 141.45,99.48 142.79,89.87 144.14,100.84 145.48,106.95 146.82,96.47 148.16,87.74 149.51,103.25 150.85,106.69 152.19,102.06 153.53,90.17 154.88,94.05 156.22,106.11 157.56,103.69 158.90,106.42 160.25,107.20 161.59,93.32 162.93,104.98 164.27,97.80 165.62,99.90 166.96,104.74 168.30,94.55 169.64,105.86 170.99,90.13 172.33,106.13 173.67,100.40 175.01,104.32 176.36,103.25 177.70,90.05 179.04,93.20 180.38,102.60 181.73,91.67 183.07,104.36 184.41,100.90 185.75,92.24 187.10,96.24 188.44,106.44 189.78,89.70 191.12,104.31 192.47,103.46 193.81,93.78 195.15,102.13 196.49,102.75 197.84,106.94 199.18,106.63 200.52,97.35 201.86,103.75 203.21,97.01 204.55,101.33 205.89,99.79 207.23,90.27 208.57,99.22 209.92,97.51 211.26,92.01 212.60,104.88 213.94,105.42 215.29,91.22 216.63,92.93 217.97,103.63 219.31,104.75 220.66,94.40 222.00,90.62 223.34,104.63 224.68,90.44 226.03,91.72 227.37,96.96 228.71,100.39 230.05,106.37 231.40,107.60 232.74,90.09 234.08,103.84 235.42,95.06 236.77,103.49 238.11,92.82 239.45,97.10 240.79,102.80 242.14,105.02 243.48,94.76 244.82,107.03 246.16,90.74 247.51,87.65 248.85,92.28 250.19,96.76 251.53,103.05 252.88,91.05 254.22,104.49 255.56,108.01 256.90,103.26 258.25,99.93 259.59,107.19 260.93,84.88 262.27,101.38 263.62,97.55 264.96,105.85 266.30,101.51 267.64,91.55 268.99,89.87 270.33,95.96 271.67,86.62 273.01,97.32 274.36,105.68 275.70,107.67 277.04,107.99 278.38,91.19 279.73,95.13 281.07,90.20 282.41,107.93 283.75,85.28 285.10,99.25 286.44,94.57 287.78,102.32 289.12,89.51 290.47,106.91 291.81,98.04 293.15,94.45 294.49,91.38 295.84,94.45 297.18,95.08 298.52,93.39 299.86,91.10 301.21,101.70 302.55,95.43 303.89,91.37 305.23,91.93 306.58,100.47 307.92,93.44 309.26,92.07 310.60,97.54 311.95,96.56 313.29,101.13 314.63,89.11 315.97,96.86 317.32,89.01 318.66,96.29 320.00,89.62 321.34,91.76 322.69,94.62 324.03,101.01 325.37,94.49 326.71,97.39 328.06,100.03 329.40,92.54 330.74,106.75 332.08,94.20 333.43,107.77 334.77,97.01 336.11,99.27 337.45,103.99 338.79,87.21 340.14,98.96 341.48,96.76 342.82,91.00 344.16,90.12 345.51,108.11 346.85,102.66 348.19,95.56 349.53,104.51 350.88,105.13 352.22,91.27 353.56,95.90 354.90,100.01 356.25,91.54 357.59,102.17 358.93,95.79 360.27,87.33 361.62,100.21 362.96,85.03 364.30,91.11 365.64,91.75 366.99,101.09 368.33,97.35 369.67,102.37 371.01,84.92 372.36,98.98 373.70,92.57 375.04,92.35 376.38,94.94 377.73,90.44 379.07,103.12 380.41,105.14 381.75,99.84 383.10,103.15 384.44,104.30 385.78,89.78 387.12,90.39 388.47,99.03 389.81,102.39 391.15,92.53 392.49,89.84 393.84,84.62 395.18,106.92 396.52,85.20 397.86,91.89 399.21,107.55 400.55,94.98 401.89,97.58 403.23,102.51 404.58,93.42 405.92,107.97 407.26,105.77 408.60,99.76 409.95,107.86 411.29,92.71 412.63,103.86 413.97,105.67 415.32,107.44 416.66,96.48 418.00,87.82 419.34,96.47 420.69,95.99 422.03,93.12 423.37,90.28 424.71,95.44 426.06,104.57 427.40,99.38 428.74,104.96 430.08,108.12 431.43,99.44 432.77,94.88 434.11,104.95 435.45,103.20 436.80,101.82 438.14,95.20 439.48,98.53 440.82,96.76 442.17,94.09 443.51,100.92 444.85,93.42 446.19,91.26 447.54,106.68 448.88,90.77 450.22,94.73 451.56,105.88 452.91,99.79 454.25,96.55 455.59,91.19 456.93,101.23 458.28,91.06 459.62,91.77 460.96,93.32 462.30,90.55 463.65,99.60 464.99,96.06 466.33,90.88 467.67,94.73 469.02,92.92 470.36,96.25 471.70,94.81" fill="none" stroke="#45A1F5" stroke-width="1.8" stroke-linejoin="round"/>
<line x1="70.5" x2="70.5" y1="12.2" y2="111.8" stroke="#333" stroke-width="1.4"/>
</svg>
<div class="t" style="left:348.49px;top:740.69px;font-size:11px;color:#111;font-weight:bold;transform:scaleX(1.0700);">100</div>
<div class="t" style="left:355.16px;top:789.84px;font-size:11px;color:#111;transform:scaleX(1.0600);">50</div>
<div class="t" style="left:361.58px;top:839.79px;font-size:11px;color:#111;font-weight:bold;transform:scaleX(1.0700);">0</div>
<div class="t" style="left:347.81px;top:851.09px;font-size:11px;color:#111;font-weight:bold;transform:scaleX(1.0700);">10:36:00</div>
<div class="t" style="left:481.22px;top:850.76px;font-size:9.5px;color:#111;transform:scaleX(1.0400);">18:20:00</div>
<div class="t" style="left:574.02px;top:850.76px;font-size:9.5px;color:#111;transform:scaleX(1.0400);">23:53:20</div>
<div class="t" style="left:667.12px;top:850.76px;font-size:9.5px;color:#111;transform:scaleX(1.0400);">05:26:40</div>
<div class="t" style="left:749.21px;top:851.09px;font-size:11px;color:#111;font-weight:bold;transform:scaleX(1.0700);">10:36:00</div>
<div class="card" style="left:853px;top:557px;width:512px;height:373px"><div class="ch"></div></div>
<svg class="abs" style="left:866.05px;top:568.50px" width="12" height="24" viewBox="0 0 12 24">
<rect x="3.9" y="1" width="4.2" height="16" rx="2.1" fill="#363636"/>
<rect x="5.2" y="2.4" width="1.6" height="3.4" rx="0.8" fill="#c8c8c8"/><rect x="5.6" y="7.5" width="0.8" height="1.6" fill="#888"/><rect x="5.6" y="10.5" width="0.8" height="1" fill="#777"/>
<circle cx="6" cy="17.6" r="3.9" fill="#363636"/></svg>
<div class="t" style="left:891.20px;top:571.20px;font-size:15px;color:#333;font-weight:bold;transform:scaleX(0.8816);">Temperatura</div>
<div class="t" style="left:1171.23px;top:571.20px;font-size:15px;color:#333;font-style:italic;transform:scaleX(0.8318);">ARKAUTE-CALDERA-01</div>
<svg class="abs" style="left:1338.0px;top:571.6px" width="14" height="14" viewBox="0 0 14 14"><path fill="#7393A3" fill-rule="evenodd" d="M5.60 1.17 L8.40 1.17 L8.47 2.85 L9.86 3.65 L11.35 2.87 L12.75 5.30 L11.33 6.20 L11.33 7.80 L12.75 8.70 L11.35 11.13 L9.86 10.35 L8.47 11.15 L8.40 12.83 L5.60 12.83 L5.53 11.15 L4.14 10.35 L2.65 11.13 L1.25 8.70 L2.67 7.80 L2.67 6.20 L1.25 5.30 L2.65 2.87 L4.14 3.65 L5.53 2.85 Z M9.20 7.00 A2.2 2.2 0 1 0 4.80 7.00 A2.2 2.2 0 1 0 9.20 7.00 Z"/></svg>
<div class="t" style="left:868.01px;top:618.20px;font-size:15px;color:#333;font-weight:bold;transform:scaleX(0.8903);">Identificador:</div>
<div class="t" style="left:956.30px;top:618.20px;font-size:15px;color:#333;transform:scaleX(0.9289);">Temperature</div>
<div class="t" style="left:868.03px;top:645.10px;font-size:15px;color:#333;font-weight:bold;transform:scaleX(0.8695);">Dispositivo:</div>
<div class="t" style="left:945.48px;top:645.10px;font-size:15px;color:#333;transform:scaleX(0.9198);">Raspberry-Pi:Prototype02</div>
<div class="t" style="left:868.90px;top:672.00px;font-size:15px;color:#333;font-weight:bold;transform:scaleX(0.8589);">Ubicación:</div>
<div class="t" style="left:938.50px;top:672.00px;font-size:15px;color:#333;transform:scaleX(0.9250);">Arkaute</div>
<div class="t" style="left:868.90px;top:698.90px;font-size:15px;color:#333;font-weight:bold;transform:scaleX(0.8481);">Unidad:</div>
<div class="t" style="left:920.00px;top:698.90px;font-size:15px;color:#333;transform:scaleX(0.8236);">°C</div>
<div class="t" style="left:931.50px;top:892.54px;font-size:12px;color:#5E5E5E;transform:scaleX(0.9733);">1 MIN</div>
<div class="t" style="left:974.50px;top:892.54px;font-size:12px;color:#5E5E5E;transform:scaleX(0.9533);">30 MINS</div>
<div class="t" style="left:1031.30px;top:892.54px;font-size:12px;color:#5E5E5E;transform:scaleX(0.9110);">1 HORA</div>
<div class="t" style="left:1083.40px;top:892.54px;font-size:12px;color:#5E5E5E;transform:scaleX(0.9207);">6 HORAS</div>
<div class="t" style="left:1143.80px;top:892.54px;font-size:12px;color:#2196F3;font-weight:bold;transform:scaleX(0.9256);">1 DÍA</div>
<div class="t" style="left:1184.40px;top:892.54px;font-size:12px;color:#5E5E5E;transform:scaleX(0.9459);">1 SEMANA</div>
<div class="t" style="left:1253.70px;top:892.54px;font-size:12px;color:#5E5E5E;transform:scaleX(0.9331);">1 MES</div>
<div class="abs" style="left:1194.2px;top:617.2px;width:155.5px;height:19.5px;background:#D9534F;border-radius:4px"></div><div class="t" style="left:1254.80px;top:661.79px;font-size:26px;color:#F44336;font-weight:bold;">32.56°C</div>
<svg class="abs" style="left:838px;top:733px" width="541" height="132" viewBox="0 0 541 132">
<line x1="70.6" x2="470.5" y1="22.5" y2="22.5" stroke="#E2E2E2" stroke-width="1"/>
<line x1="70.6" x2="470.5" y1="64.5" y2="64.5" stroke="#E2E2E2" stroke-width="1"/>
<line x1="199.5" x2="199.5" y1="12.2" y2="111.3" stroke="#E2E2E2" stroke-width="1"/>
<line x1="292.5" x2="292.5" y1="12.2" y2="111.3" stroke="#E2E2E2" stroke-width="1"/>
<line x1="385.5" x2="385.5" y1="12.2" y2="111.3" stroke="#E2E2E2" stroke-width="1"/>
<line x1="70.6" x2="470.5" y1="43.75" y2="43.75" stroke="#F43" stroke-width="1.5" stroke-dasharray="5,5"/>
<line x1="70.6" x2="470.5" y1="107.75" y2="107.75" stroke="#62B862" stroke-width="1.3" stroke-dasharray="5,5"/>
<polyline points="70.60,41.42 71.94,26.82 73.27,37.08 74.61,106.96 75.95,22.23 77.29,20.86 78.62,108.86 79.96,110.44 81.30,47.28 82.64,15.05 83.97,108.76 85.31,33.69 86.65,46.19 87.99,107.16 89.32,16.29 90.66,14.23 92.00,94.64 93.34,37.26 94.67,33.31 96.01,47.83 97.35,46.83 98.69,38.99 100.02,40.13 101.36,39.40 102.70,106.69 104.04,17.94 105.37,25.20 106.71,110.81 108.05,39.84 109.39,39.16 110.72,28.47 112.06,97.62 113.40,19.78 114.74,34.70 116.07,33.83 117.41,104.85 118.75,20.64 120.09,39.25 121.42,83.78 122.76,25.08 124.10,15.83 125.44,106.94 126.77,39.68 128.11,106.53 129.45,38.86 130.79,44.95 132.12,43.82 133.46,39.88 134.80,104.32 136.14,37.96 137.47,43.50 138.81,111.24 140.15,39.35 141.49,90.01 142.82,34.04 144.16,18.88 145.50,110.85 146.84,27.30 148.17,46.42 149.51,106.42 150.85,24.30 152.18,106.07 153.52,39.53 154.86,47.25 156.20,21.92 157.53,32.45 158.87,107.69 160.21,104.16 161.55,44.11 162.88,24.29 164.22,15.39 165.56,105.19 166.90,37.34 168.23,110.00 169.57,20.75 170.91,26.96 172.25,37.22 173.58,39.90 174.92,111.09 176.26,28.72 177.60,35.02 178.93,92.94 180.27,22.98 181.61,34.61 182.95,18.66 184.28,47.37 185.62,106.11 186.96,111.24 188.30,37.70 189.63,110.30 190.97,36.56 192.31,38.94 193.65,18.90 194.98,110.76 196.32,28.27 197.66,18.97 199.00,108.68 200.33,28.93 201.67,106.28 203.01,38.56 204.35,19.31 205.68,109.58 207.02,22.33 208.36,46.12 209.70,106.80 211.03,32.23 212.37,44.34 213.71,109.69 215.05,15.65 216.38,14.62 217.72,32.73 219.06,34.92 220.40,91.48 221.73,27.74 223.07,20.82 224.41,106.86 225.75,13.01 227.08,27.56 228.42,107.35 229.76,38.59 231.09,29.28 232.43,23.56 233.77,43.87 235.11,111.00 236.44,98.47 237.78,35.36 239.12,13.04 240.46,111.27 241.79,17.98 243.13,36.56 244.47,33.53 245.81,29.37 247.14,106.16 248.48,86.92 249.82,32.23 251.16,37.44 252.49,109.46 253.83,45.57 255.17,39.43 256.51,104.63 257.84,39.98 259.18,35.48 260.52,46.49 261.86,36.40 263.19,104.17 264.53,106.58 265.87,31.20 267.21,34.31 268.54,111.15 269.88,107.93 271.22,109.18 272.56,35.98 273.89,40.43 275.23,34.65 276.57,39.62 277.91,42.16 279.24,41.43 280.58,36.99 281.92,34.37 283.26,41.37 284.59,35.82 285.93,37.64 287.27,36.44 288.61,30.91 289.94,41.58 291.28,30.17 292.62,110.24 293.96,105.36 295.29,35.39 296.63,38.95 297.97,106.39 299.31,109.58 300.64,40.28 301.98,43.16 303.32,24.31 304.66,104.53 305.99,109.82 307.33,33.51 308.67,47.60 310.01,36.33 311.34,35.19 312.68,33.50 314.02,44.10 315.35,42.53 316.69,35.25 318.03,44.98 319.37,107.74 320.70,41.68 322.04,35.98 323.38,105.21 324.72,25.80 326.05,43.29 327.39,31.05 328.73,92.26 330.07,107.49 331.40,39.71 332.74,36.78 334.08,31.80 335.42,106.58 336.75,107.52 338.09,34.59 339.43,26.53 340.77,21.99 342.10,108.98 343.44,105.03 344.78,33.98 346.12,18.41 347.45,108.78 348.79,33.09 350.13,30.77 351.47,89.67 352.80,15.03 354.14,33.52 355.48,104.96 356.82,105.89 358.15,42.95 359.49,40.97 360.83,104.38 362.17,105.97 363.50,29.13 364.84,83.08 366.18,83.57 367.52,42.58 368.85,111.29 370.19,31.03 371.53,28.54 372.87,43.83 374.20,104.54 375.54,26.40 376.88,20.67 378.22,36.48 379.55,93.09 380.89,23.34 382.23,37.56 383.57,25.43 384.90,20.43 386.24,104.06 387.58,21.32 388.92,28.77 390.25,110.66 391.59,29.82 392.93,99.22 394.26,31.63 395.60,34.02 396.94,33.97 398.28,33.11 399.61,28.69 400.95,30.90 402.29,37.58 403.63,34.30 404.96,40.79 406.30,40.61 407.64,32.92 408.98,29.10 410.31,37.27 411.65,30.24 412.99,89.50 414.33,41.78 415.66,32.41 417.00,27.43 418.34,104.21 419.68,45.59 421.01,25.69 422.35,110.92 423.69,38.36 425.03,39.79 426.36,39.06 427.70,29.79 429.04,106.32 430.38,107.49 431.71,42.32 433.05,105.40 434.39,30.58 435.73,107.47 437.06,30.89 438.40,104.75 439.74,94.12 441.08,20.79 442.41,109.29 443.75,14.70 445.09,39.73 446.43,17.72 447.76,111.11 449.10,39.93 450.44,29.13 451.78,107.40 453.11,44.03 454.45,24.23 455.79,107.47 457.13,100.99 458.46,43.73 459.80,41.92 461.14,37.32 462.48,105.85 463.81,104.43 465.15,30.28 466.49,85.95 467.83,28.87 469.16,104.67 470.50,37.19" fill="none" stroke="#45A1F5" stroke-width="1.8" stroke-linejoin="round"/>
<line x1="70.5" x2="70.5" y1="12.2" y2="111.8" stroke="#333" stroke-width="1.4"/>
</svg>
<div class="t" style="left:882.52px;top:740.69px;font-size:11px;color:#111;font-weight:bold;transform:scaleX(1.0700);">44.8</div>
<div class="t" style="left:892.46px;top:750.45px;font-size:11px;color:#111;transform:scaleX(1.0600);">40</div>
<div class="t" style="left:892.46px;top:792.80px;font-size:11px;color:#111;transform:scaleX(1.0600);">20</div>
<div class="t" style="left:894.96px;top:839.79px;font-size:11px;color:#111;font-weight:bold;transform:scaleX(1.0700);">-2</div>
<div class="t" style="left:885.11px;top:851.09px;font-size:11px;color:#111;font-weight:bold;transform:scaleX(1.0700);">10:36:00</div>
<div class="t" style="left:1017.92px;top:850.76px;font-size:9.5px;color:#111;transform:scaleX(1.0400);">18:20:00</div>
<div class="t" style="left:1110.92px;top:850.76px;font-size:9.5px;color:#111;transform:scaleX(1.0400);">23:53:20</div>
<div class="t" style="left:1203.92px;top:850.76px;font-size:9.5px;color:#111;transform:scaleX(1.0400);">05:26:40</div>
<div class="t" style="left:1285.01px;top:851.09px;font-size:11px;color:#111;font-weight:bold;transform:scaleX(1.0700);">10:36:00</div>
</body></html>
